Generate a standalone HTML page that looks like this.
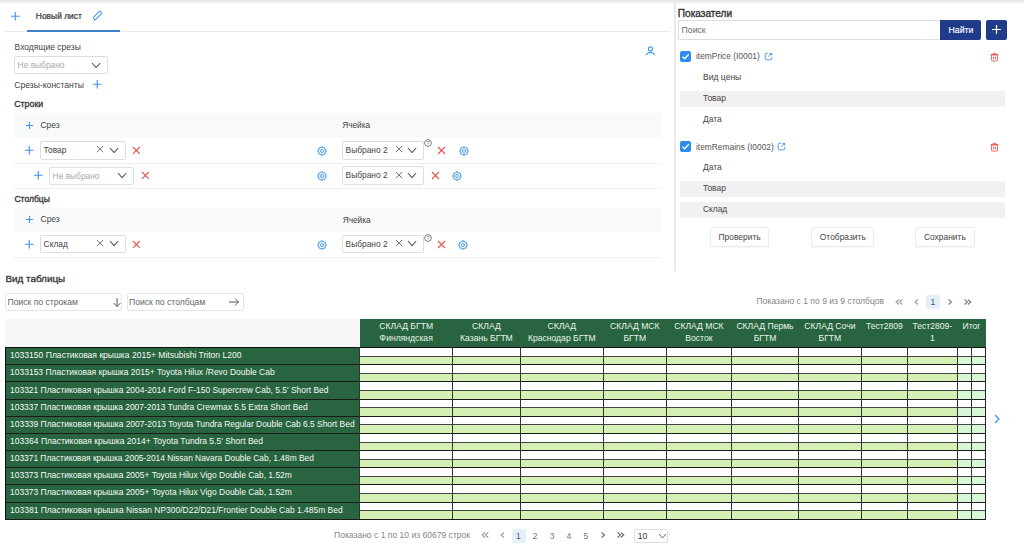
<!DOCTYPE html><html><head><meta charset="utf-8"><style>
html,body{margin:0;padding:0;}
body{width:1024px;height:552px;overflow:hidden;position:relative;background:#fff;font-family:"Liberation Sans", sans-serif;}
.a{position:absolute;}
.t{position:absolute;line-height:1;white-space:nowrap;}
</style></head><body>
<div class="a" style="left:0px;top:0px;width:1024px;height:5px;background:linear-gradient(#e3e3e3,#f4f4f4 50%,#fff)"></div>
<svg class="a" style="left:10.3px;top:10.899999999999999px" width="10.6" height="10.6" viewBox="0 0 10.6 10.6"><path d="M5.3 1V9.6M1 5.3H9.6" stroke="#3f93f2" stroke-width="1.1" fill="none"/></svg>
<div class="t" style="left:35.80px;top:12.05px;font-size:8.45px;font-weight:400;color:#333;-webkit-text-stroke:0.2px #333">Новый лист</div>
<svg class="a" style="left:91px;top:9px" width="13" height="13" viewBox="0 0 13 13"><g transform="translate(6.4 6.5) rotate(-45)"><path d="M-5 1.5V-0.2A1.6 1.6 0 0 1 -3.4 -1.6H3.6A1.6 1.6 0 0 1 3.6 1.6H-3.6Z" stroke="#3f93f2" stroke-width="1" fill="none" stroke-linejoin="round"/></g></svg>
<div class="a" style="left:5px;top:31px;width:665px;height:1px;background:#e8eaec"></div>
<div class="a" style="left:27px;top:30px;width:93px;height:2px;background:#3f7fd0"></div>
<div class="t" style="left:14.60px;top:43.40px;font-size:8.5px;font-weight:400;color:#444;">Входящие срезы</div>
<div class="a" style="left:14px;top:56px;width:94px;height:18px;border:1px solid #dcdee2;border-radius:2px;box-sizing:border-box;background:#fff"></div>
<div class="t" style="left:17.60px;top:61.09px;font-size:8.4px;font-weight:400;color:#a8a8a8;">Не выбрано</div>
<svg class="a" style="left:91.2px;top:61.8px" width="10.2" height="6.6" viewBox="0 0 10.2 6.6"><path d="M1 1L5.1 5.6L9.2 1" stroke="#555" stroke-width="1.1" fill="none"/></svg>
<div class="t" style="left:14.20px;top:80.52px;font-size:8.6px;font-weight:400;color:#444;">Срезы-константы</div>
<svg class="a" style="left:91.75px;top:79.25px" width="10.5" height="10.5" viewBox="0 0 10.5 10.5"><path d="M5.25 1V9.5M1 5.25H9.5" stroke="#3f93f2" stroke-width="1.15" fill="none"/></svg>
<svg class="a" style="left:644px;top:46px" width="13" height="11" viewBox="0 0 13 11"><circle cx="6.4" cy="2.9" r="2.0" stroke="#3f93f2" stroke-width="1.1" fill="none"/><path d="M2.3 8.7C3.2 7 4.6 6.4 6.4 6.4S9.7 7 10.6 8.7" stroke="#3f93f2" stroke-width="1.1" fill="none" stroke-linecap="round"/></svg>
<div class="t" style="left:14.20px;top:100.31px;font-size:8.85px;font-weight:400;color:#333;-webkit-text-stroke:0.3px #333">Строки</div>
<div class="a" style="left:14px;top:113px;width:647px;height:25px;background:#f8f9fa"></div>
<svg class="a" style="left:25.2px;top:121.0px" width="9" height="9" viewBox="0 0 9 9"><path d="M4.5 1V8M1 4.5H8" stroke="#3f93f2" stroke-width="1.0" fill="none"/></svg>
<div class="t" style="left:40.50px;top:121.19px;font-size:8.4px;font-weight:400;color:#444;">Срез</div>
<div class="t" style="left:342.20px;top:121.37px;font-size:8.3px;font-weight:400;color:#444;">Ячейка</div>
<svg class="a" style="left:24.15px;top:145.45px" width="10.5" height="10.5" viewBox="0 0 10.5 10.5"><path d="M5.25 1V9.5M1 5.25H9.5" stroke="#3f93f2" stroke-width="1.15" fill="none"/></svg>
<div class="a" style="left:40px;top:141px;width:85.5px;height:18.5px;border:1px solid #dcdee2;border-radius:2px;box-sizing:border-box;background:#fff"></div>
<div class="t" style="left:43.60px;top:146.09px;font-size:8.4px;font-weight:400;color:#444;">Товар</div>
<svg class="a" style="left:96.0px;top:145.4px" width="8.2" height="8.2" viewBox="0 0 8.2 8.2"><path d="M1 1L7.2 7.2M7.2 1L1 7.2" stroke="#707070" stroke-width="1.0" fill="none"/></svg>
<svg class="a" style="left:108.7px;top:146.8px" width="10.2" height="6.6" viewBox="0 0 10.2 6.6"><path d="M1 1L5.1 5.6L9.2 1" stroke="#555" stroke-width="1.1" fill="none"/></svg>
<svg class="a" style="left:132.0px;top:146.39999999999998px" width="8.8" height="8.8" viewBox="0 0 8.8 8.8"><path d="M1 1L7.800000000000001 7.800000000000001M7.800000000000001 1L1 7.800000000000001" stroke="#e4534c" stroke-width="1.1" fill="none"/></svg>
<svg class="a" style="left:316.3px;top:144.70000000000002px" width="12" height="12" viewBox="0 0 12 12"><polygon points="6.00,1.70 7.32,2.82 9.04,2.96 9.18,4.68 10.30,6.00 9.18,7.32 9.04,9.04 7.32,9.18 6.00,10.30 4.68,9.18 2.96,9.04 2.82,7.32 1.70,6.00 2.82,4.68 2.96,2.96 4.68,2.82" stroke="#4499f2" stroke-width="1.1" fill="none" stroke-linejoin="round"/><circle cx="6" cy="6" r="1.5" stroke="#4499f2" stroke-width="0.95" fill="none"/></svg>
<div class="a" style="left:342px;top:141px;width:82px;height:18.5px;border:1px solid #dcdee2;border-radius:2px;box-sizing:border-box;background:#fff"></div>
<div class="t" style="left:345.60px;top:146.09px;font-size:8.4px;font-weight:400;color:#444;">Выбрано 2</div>
<svg class="a" style="left:394.5px;top:145.4px" width="8.2" height="8.2" viewBox="0 0 8.2 8.2"><path d="M1 1L7.2 7.2M7.2 1L1 7.2" stroke="#707070" stroke-width="1.0" fill="none"/></svg>
<svg class="a" style="left:407.2px;top:146.8px" width="10.2" height="6.6" viewBox="0 0 10.2 6.6"><path d="M1 1L5.1 5.6L9.2 1" stroke="#555" stroke-width="1.1" fill="none"/></svg>
<svg class="a" style="left:424.2px;top:139.3px" width="8" height="8" viewBox="0 0 8 8"><circle cx="4" cy="4" r="3.4" stroke="#6a6a6a" stroke-width="0.85" fill="none"/><text x="4" y="6.1" font-size="5.6" text-anchor="middle" fill="#6a6a6a" font-family="Liberation Sans">?</text></svg>
<svg class="a" style="left:437.1px;top:146.39999999999998px" width="9.0" height="9.0" viewBox="0 0 9.0 9.0"><path d="M1 1L8.0 8.0M8.0 1L1 8.0" stroke="#e4534c" stroke-width="1.1" fill="none"/></svg>
<svg class="a" style="left:457.5px;top:145.0px" width="12" height="12" viewBox="0 0 12 12"><polygon points="6.00,1.70 7.32,2.82 9.04,2.96 9.18,4.68 10.30,6.00 9.18,7.32 9.04,9.04 7.32,9.18 6.00,10.30 4.68,9.18 2.96,9.04 2.82,7.32 1.70,6.00 2.82,4.68 2.96,2.96 4.68,2.82" stroke="#4499f2" stroke-width="1.1" fill="none" stroke-linejoin="round"/><circle cx="6" cy="6" r="1.5" stroke="#4499f2" stroke-width="0.95" fill="none"/></svg>
<div class="a" style="left:14px;top:163px;width:647px;height:1px;background:#eceef1"></div>
<svg class="a" style="left:32.85px;top:170.25px" width="10.5" height="10.5" viewBox="0 0 10.5 10.5"><path d="M5.25 1V9.5M1 5.25H9.5" stroke="#3f93f2" stroke-width="1.15" fill="none"/></svg>
<div class="a" style="left:49px;top:166.5px;width:85px;height:18.19999999999999px;border:1px solid #dcdee2;border-radius:2px;box-sizing:border-box;background:#fff"></div>
<div class="t" style="left:52.60px;top:171.59px;font-size:8.4px;font-weight:400;color:#a8a8a8;">Не выбрано</div>
<svg class="a" style="left:117.2px;top:172.3px" width="10.2" height="6.6" viewBox="0 0 10.2 6.6"><path d="M1 1L5.1 5.6L9.2 1" stroke="#555" stroke-width="1.1" fill="none"/></svg>
<svg class="a" style="left:140.5px;top:171.2px" width="8.8" height="8.8" viewBox="0 0 8.8 8.8"><path d="M1 1L7.800000000000001 7.800000000000001M7.800000000000001 1L1 7.800000000000001" stroke="#e4534c" stroke-width="1.1" fill="none"/></svg>
<svg class="a" style="left:316.2px;top:169.60000000000002px" width="12" height="12" viewBox="0 0 12 12"><polygon points="6.00,1.70 7.32,2.82 9.04,2.96 9.18,4.68 10.30,6.00 9.18,7.32 9.04,9.04 7.32,9.18 6.00,10.30 4.68,9.18 2.96,9.04 2.82,7.32 1.70,6.00 2.82,4.68 2.96,2.96 4.68,2.82" stroke="#4499f2" stroke-width="1.1" fill="none" stroke-linejoin="round"/><circle cx="6" cy="6" r="1.5" stroke="#4499f2" stroke-width="0.95" fill="none"/></svg>
<div class="a" style="left:342px;top:166.3px;width:82px;height:18.399999999999977px;border:1px solid #dcdee2;border-radius:2px;box-sizing:border-box;background:#fff"></div>
<div class="t" style="left:345.60px;top:171.39px;font-size:8.4px;font-weight:400;color:#444;">Выбрано 2</div>
<svg class="a" style="left:394.5px;top:170.70000000000002px" width="8.2" height="8.2" viewBox="0 0 8.2 8.2"><path d="M1 1L7.2 7.2M7.2 1L1 7.2" stroke="#707070" stroke-width="1.0" fill="none"/></svg>
<svg class="a" style="left:407.2px;top:172.10000000000002px" width="10.2" height="6.6" viewBox="0 0 10.2 6.6"><path d="M1 1L5.1 5.6L9.2 1" stroke="#555" stroke-width="1.1" fill="none"/></svg>
<svg class="a" style="left:430.5px;top:171.2px" width="9.0" height="9.0" viewBox="0 0 9.0 9.0"><path d="M1 1L8.0 8.0M8.0 1L1 8.0" stroke="#e4534c" stroke-width="1.1" fill="none"/></svg>
<svg class="a" style="left:450.6px;top:169.60000000000002px" width="12" height="12" viewBox="0 0 12 12"><polygon points="6.00,1.70 7.32,2.82 9.04,2.96 9.18,4.68 10.30,6.00 9.18,7.32 9.04,9.04 7.32,9.18 6.00,10.30 4.68,9.18 2.96,9.04 2.82,7.32 1.70,6.00 2.82,4.68 2.96,2.96 4.68,2.82" stroke="#4499f2" stroke-width="1.1" fill="none" stroke-linejoin="round"/><circle cx="6" cy="6" r="1.5" stroke="#4499f2" stroke-width="0.95" fill="none"/></svg>
<div class="a" style="left:14px;top:188px;width:647px;height:1px;background:#eceef1"></div>
<div class="t" style="left:14.40px;top:194.76px;font-size:8.55px;font-weight:400;color:#333;-webkit-text-stroke:0.3px #333">Столбцы</div>
<div class="a" style="left:14px;top:208px;width:647px;height:24px;background:#f8f9fa"></div>
<svg class="a" style="left:25.2px;top:215.1px" width="9" height="9" viewBox="0 0 9 9"><path d="M4.5 1V8M1 4.5H8" stroke="#3f93f2" stroke-width="1.0" fill="none"/></svg>
<div class="t" style="left:40.60px;top:215.29px;font-size:8.4px;font-weight:400;color:#444;">Срез</div>
<div class="t" style="left:342.70px;top:215.57px;font-size:8.3px;font-weight:400;color:#444;">Ячейка</div>
<svg class="a" style="left:24.25px;top:239.15px" width="10.5" height="10.5" viewBox="0 0 10.5 10.5"><path d="M5.25 1V9.5M1 5.25H9.5" stroke="#3f93f2" stroke-width="1.15" fill="none"/></svg>
<div class="a" style="left:40px;top:234.5px;width:85.5px;height:18.900000000000006px;border:1px solid #dcdee2;border-radius:2px;box-sizing:border-box;background:#fff"></div>
<div class="t" style="left:43.60px;top:239.59px;font-size:8.4px;font-weight:400;color:#444;">Склад</div>
<svg class="a" style="left:96.0px;top:238.9px" width="8.2" height="8.2" viewBox="0 0 8.2 8.2"><path d="M1 1L7.2 7.2M7.2 1L1 7.2" stroke="#707070" stroke-width="1.0" fill="none"/></svg>
<svg class="a" style="left:108.7px;top:240.3px" width="10.2" height="6.6" viewBox="0 0 10.2 6.6"><path d="M1 1L5.1 5.6L9.2 1" stroke="#555" stroke-width="1.1" fill="none"/></svg>
<svg class="a" style="left:132.3px;top:239.89999999999998px" width="8.8" height="8.8" viewBox="0 0 8.8 8.8"><path d="M1 1L7.800000000000001 7.800000000000001M7.800000000000001 1L1 7.800000000000001" stroke="#e4534c" stroke-width="1.1" fill="none"/></svg>
<svg class="a" style="left:316.2px;top:238.60000000000002px" width="12" height="12" viewBox="0 0 12 12"><polygon points="6.00,1.70 7.32,2.82 9.04,2.96 9.18,4.68 10.30,6.00 9.18,7.32 9.04,9.04 7.32,9.18 6.00,10.30 4.68,9.18 2.96,9.04 2.82,7.32 1.70,6.00 2.82,4.68 2.96,2.96 4.68,2.82" stroke="#4499f2" stroke-width="1.1" fill="none" stroke-linejoin="round"/><circle cx="6" cy="6" r="1.5" stroke="#4499f2" stroke-width="0.95" fill="none"/></svg>
<div class="a" style="left:342px;top:234.6px;width:82px;height:18.700000000000017px;border:1px solid #dcdee2;border-radius:2px;box-sizing:border-box;background:#fff"></div>
<div class="t" style="left:345.60px;top:239.69px;font-size:8.4px;font-weight:400;color:#444;">Выбрано 2</div>
<svg class="a" style="left:394.5px;top:239.0px" width="8.2" height="8.2" viewBox="0 0 8.2 8.2"><path d="M1 1L7.2 7.2M7.2 1L1 7.2" stroke="#707070" stroke-width="1.0" fill="none"/></svg>
<svg class="a" style="left:407.2px;top:240.4px" width="10.2" height="6.6" viewBox="0 0 10.2 6.6"><path d="M1 1L5.1 5.6L9.2 1" stroke="#555" stroke-width="1.1" fill="none"/></svg>
<svg class="a" style="left:424.2px;top:233.6px" width="8" height="8" viewBox="0 0 8 8"><circle cx="4" cy="4" r="3.4" stroke="#6a6a6a" stroke-width="0.85" fill="none"/><text x="4" y="6.1" font-size="5.6" text-anchor="middle" fill="#6a6a6a" font-family="Liberation Sans">?</text></svg>
<svg class="a" style="left:436.8px;top:239.89999999999998px" width="9.0" height="9.0" viewBox="0 0 9.0 9.0"><path d="M1 1L8.0 8.0M8.0 1L1 8.0" stroke="#e4534c" stroke-width="1.1" fill="none"/></svg>
<svg class="a" style="left:457.2px;top:238.60000000000002px" width="12" height="12" viewBox="0 0 12 12"><polygon points="6.00,1.70 7.32,2.82 9.04,2.96 9.18,4.68 10.30,6.00 9.18,7.32 9.04,9.04 7.32,9.18 6.00,10.30 4.68,9.18 2.96,9.04 2.82,7.32 1.70,6.00 2.82,4.68 2.96,2.96 4.68,2.82" stroke="#4499f2" stroke-width="1.1" fill="none" stroke-linejoin="round"/><circle cx="6" cy="6" r="1.5" stroke="#4499f2" stroke-width="0.95" fill="none"/></svg>
<div class="a" style="left:14px;top:256.5px;width:647px;height:1.0px;background:#eceef1"></div>
<div class="a" style="left:674px;top:1px;width:2px;height:270px;background:#e9eaec"></div>
<div class="t" style="left:677.80px;top:8.85px;font-size:10.1px;font-weight:400;color:#333;-webkit-text-stroke:0.35px #333">Показатели</div>
<div class="a" style="left:678px;top:20px;width:262px;height:20px;border:1px solid #dcdee2;border-right:none;box-sizing:border-box;border-radius:2px 0 0 2px"></div>
<div class="t" style="left:681.60px;top:25.84px;font-size:8.7px;font-weight:400;color:#6a6a6a;">Поиск</div>
<div class="a" style="left:940px;top:20px;width:41px;height:20px;background:#1f3b8a;border-radius:0 2px 2px 0"></div>
<div class="t" style="left:948.60px;top:26.04px;font-size:8.7px;font-weight:400;color:#fff;-webkit-text-stroke:0.15px #fff">Найти</div>
<div class="a" style="left:986px;top:20px;width:21.299999999999955px;height:20px;background:#1f3b8a;border-radius:2px"></div>
<svg class="a" style="left:991.2px;top:23.9px" width="11" height="11" viewBox="0 0 11 11"><path d="M5.5 1V10M1 5.5H10" stroke="#fff" stroke-width="1.2" fill="none"/></svg>
<svg class="a" style="left:679.8px;top:51px" width="11" height="11" viewBox="0 0 11 11"><rect x="0" y="0" width="11" height="11" rx="2" fill="#2d8cf0"/><path d="M2.4 5.6L4.6 7.8L8.8 3.2" stroke="#fff" stroke-width="1.3" fill="none"/></svg>
<div class="t" style="left:696.00px;top:52.49px;font-size:8.4px;font-weight:400;color:#555;">itemPrice (I0001)</div>
<svg class="a" style="left:763.7px;top:51.7px" width="9" height="9" viewBox="0 0 9 9"><path d="M4.2 1.2H2.5a1.3 1.3 0 0 0-1.3 1.3V6.5a1.3 1.3 0 0 0 1.3 1.3H6.5a1.3 1.3 0 0 0 1.3-1.3V4.9" stroke="#3f93f2" stroke-width="0.95" fill="none"/><path d="M4.3 4.7L7.2 1.8" stroke="#3f93f2" stroke-width="0.9" fill="none"/><path d="M5.2 0.9H8.1V3.8Z" fill="#3f93f2"/></svg>
<svg class="a" style="left:989.8px;top:51.5px" width="9" height="10" viewBox="0 0 9 10"><path d="M1.6 2.9H7.4V8.2a0.8 0.8 0 0 1-0.8 0.8H2.4a0.8 0.8 0 0 1-0.8-0.8Z" stroke="#e4534c" stroke-width="0.9" fill="none"/><path d="M0.6 2.6H8.4M3.2 2.5V1.3H5.8V2.5M3.6 4.6V7.2M5.4 4.6V7.2" stroke="#e4534c" stroke-width="0.9" fill="none"/></svg>
<div class="t" style="left:703.00px;top:72.96px;font-size:8.55px;font-weight:400;color:#444;">Вид цены</div>
<div class="a" style="left:679.8px;top:90.8px;width:325.20000000000005px;height:16.0px;background:#f1f1f1"></div>
<div class="t" style="left:703.00px;top:94.09px;font-size:8.4px;font-weight:400;color:#444;">Товар</div>
<div class="t" style="left:703.00px;top:114.69px;font-size:8.4px;font-weight:400;color:#444;">Дата</div>
<svg class="a" style="left:679.8px;top:141px" width="11" height="11" viewBox="0 0 11 11"><rect x="0" y="0" width="11" height="11" rx="2" fill="#2d8cf0"/><path d="M2.4 5.6L4.6 7.8L8.8 3.2" stroke="#fff" stroke-width="1.3" fill="none"/></svg>
<div class="t" style="left:696.00px;top:142.59px;font-size:8.4px;font-weight:400;color:#555;">itemRemains (I0002)</div>
<svg class="a" style="left:777.2px;top:141.7px" width="9" height="9" viewBox="0 0 9 9"><path d="M4.2 1.2H2.5a1.3 1.3 0 0 0-1.3 1.3V6.5a1.3 1.3 0 0 0 1.3 1.3H6.5a1.3 1.3 0 0 0 1.3-1.3V4.9" stroke="#3f93f2" stroke-width="0.95" fill="none"/><path d="M4.3 4.7L7.2 1.8" stroke="#3f93f2" stroke-width="0.9" fill="none"/><path d="M5.2 0.9H8.1V3.8Z" fill="#3f93f2"/></svg>
<svg class="a" style="left:989.8px;top:141.5px" width="9" height="10" viewBox="0 0 9 10"><path d="M1.6 2.9H7.4V8.2a0.8 0.8 0 0 1-0.8 0.8H2.4a0.8 0.8 0 0 1-0.8-0.8Z" stroke="#e4534c" stroke-width="0.9" fill="none"/><path d="M0.6 2.6H8.4M3.2 2.5V1.3H5.8V2.5M3.6 4.6V7.2M5.4 4.6V7.2" stroke="#e4534c" stroke-width="0.9" fill="none"/></svg>
<div class="t" style="left:703.00px;top:163.09px;font-size:8.4px;font-weight:400;color:#444;">Дата</div>
<div class="a" style="left:679.8px;top:180.8px;width:325.20000000000005px;height:16.0px;background:#f1f1f1"></div>
<div class="t" style="left:703.00px;top:184.09px;font-size:8.4px;font-weight:400;color:#444;">Товар</div>
<div class="a" style="left:679.8px;top:201.5px;width:325.20000000000005px;height:16.30000000000001px;background:#f1f1f1"></div>
<div class="t" style="left:703.00px;top:205.09px;font-size:8.4px;font-weight:400;color:#444;">Склад</div>
<div class="a" style="left:709.7px;top:227px;width:59.799999999999955px;height:19.5px;border:1px solid #eaecef;border-radius:2px;box-sizing:border-box;background:#fff;box-shadow:0 0.5px 1px rgba(0,0,0,0.04)"></div>
<div class="t" style="left:709.7px;top:233.15px;width:59.799999999999955px;text-align:center;font-size:8.45px;color:#444">Проверить</div>
<div class="a" style="left:811.3px;top:227px;width:63.0px;height:19.5px;border:1px solid #eaecef;border-radius:2px;box-sizing:border-box;background:#fff;box-shadow:0 0.5px 1px rgba(0,0,0,0.04)"></div>
<div class="t" style="left:811.3px;top:233.15px;width:63.0px;text-align:center;font-size:8.45px;color:#444">Отобразить</div>
<div class="a" style="left:915px;top:227px;width:59.700000000000045px;height:19.5px;border:1px solid #eaecef;border-radius:2px;box-sizing:border-box;background:#fff;box-shadow:0 0.5px 1px rgba(0,0,0,0.04)"></div>
<div class="t" style="left:915px;top:233.15px;width:59.700000000000045px;text-align:center;font-size:8.45px;color:#444">Сохранить</div>
<div class="t" style="left:5.40px;top:274.02px;font-size:9.9px;font-weight:400;color:#383838;-webkit-text-stroke:0.35px #383838">Вид таблицы</div>
<div class="a" style="left:5.4px;top:292.8px;width:116.19999999999999px;height:17.899999999999977px;border:1px solid #e3e5e8;border-radius:2px;box-sizing:border-box"></div>
<div class="t" style="left:7.50px;top:297.52px;font-size:8.6px;font-weight:400;color:#666;">Поиск по строкам</div>
<svg class="a" style="left:111.5px;top:297px" width="10" height="11" viewBox="0 0 10 11"><path d="M5 1V9.5M1.5 6L5 9.5L8.5 6" stroke="#555" stroke-width="1" fill="none"/></svg>
<div class="a" style="left:127px;top:292.8px;width:117px;height:17.899999999999977px;border:1px solid #e3e5e8;border-radius:2px;box-sizing:border-box"></div>
<div class="t" style="left:129.00px;top:297.52px;font-size:8.6px;font-weight:400;color:#666;">Поиск по столбцам</div>
<svg class="a" style="left:227.5px;top:296.5px" width="12" height="10" viewBox="0 0 12 10"><path d="M1 5H10.5M7 1.5L10.5 5L7 8.5" stroke="#555" stroke-width="1" fill="none"/></svg>
<div class="t" style="left:756.60px;top:297.06px;font-size:8.55px;font-weight:400;color:#858585;">Показано с 1 по 9 из 9 столбцов</div>
<svg class="a" style="left:895px;top:298.6px" width="8" height="6" viewBox="0 0 8 6"><path d="M4 0.5L1 3L4 5.5M7.3 0.5L4.3 3L7.3 5.5" stroke="#999" stroke-width="1.05" fill="none"/></svg>
<svg class="a" style="left:913.8px;top:298.6px" width="4.5" height="6" viewBox="0 0 4.5 6"><path d="M4 0.5L1 3L4 5.5" stroke="#999" stroke-width="1.05" fill="none"/></svg>
<div class="a" style="left:926.3px;top:294.8px;width:13.900000000000091px;height:14.199999999999989px;background:#e3effb;border-radius:2px"></div>
<div class="t" style="left:930.60px;top:297.80px;font-size:8.5px;font-weight:400;color:#555;">1</div>
<svg class="a" style="left:948px;top:298.6px" width="4.5" height="6" viewBox="0 0 4.5 6"><path d="M0.5 0.5L3.5 3L0.5 5.5" stroke="#777" stroke-width="1.05" fill="none"/></svg>
<svg class="a" style="left:964px;top:298.6px" width="8" height="6" viewBox="0 0 8 6"><path d="M0.5 0.5L3.5 3L0.5 5.5M3.8 0.5L6.8 3L3.8 5.5" stroke="#777" stroke-width="1.05" fill="none"/></svg>
<div class="a" style="left:5px;top:318.5px;width:354.5px;height:29.0px;background:#f6f7f7"></div>
<div class="a" style="left:359.5px;top:318.5px;width:626.0px;height:29.0px;background:#27643f"></div>
<div class="t" style="left:359.5px;top:322.05px;width:93.39999999999998px;text-align:center;font-size:8.6px;color:#eaf5ec">СКЛАД БГТМ</div>
<div class="t" style="left:359.5px;top:334.45px;width:93.39999999999998px;text-align:center;font-size:8.6px;color:#eaf5ec">Финляндская</div>
<div class="t" style="left:452.9px;top:322.05px;width:67.10000000000002px;text-align:center;font-size:8.6px;color:#eaf5ec">СКЛАД</div>
<div class="t" style="left:452.9px;top:334.45px;width:67.10000000000002px;text-align:center;font-size:8.6px;color:#eaf5ec">Казань БГТМ</div>
<div class="t" style="left:520px;top:322.05px;width:83.70000000000005px;text-align:center;font-size:8.6px;color:#eaf5ec">СКЛАД</div>
<div class="t" style="left:520px;top:334.45px;width:83.70000000000005px;text-align:center;font-size:8.6px;color:#eaf5ec">Краснодар БГТМ</div>
<div class="t" style="left:603.7px;top:322.05px;width:62.299999999999955px;text-align:center;font-size:8.6px;color:#eaf5ec">СКЛАД МСК</div>
<div class="t" style="left:603.7px;top:334.45px;width:62.299999999999955px;text-align:center;font-size:8.6px;color:#eaf5ec">БГТМ</div>
<div class="t" style="left:666px;top:322.05px;width:65.79999999999995px;text-align:center;font-size:8.6px;color:#eaf5ec">СКЛАД МСК</div>
<div class="t" style="left:666px;top:334.45px;width:65.79999999999995px;text-align:center;font-size:8.6px;color:#eaf5ec">Восток</div>
<div class="t" style="left:731.8px;top:322.05px;width:66.40000000000009px;text-align:center;font-size:8.6px;color:#eaf5ec">СКЛАД Пермь</div>
<div class="t" style="left:731.8px;top:334.45px;width:66.40000000000009px;text-align:center;font-size:8.6px;color:#eaf5ec">БГТМ</div>
<div class="t" style="left:798.2px;top:322.05px;width:63.39999999999998px;text-align:center;font-size:8.6px;color:#eaf5ec">СКЛАД Сочи</div>
<div class="t" style="left:798.2px;top:334.45px;width:63.39999999999998px;text-align:center;font-size:8.6px;color:#eaf5ec">БГТМ</div>
<div class="t" style="left:861.6px;top:322.05px;width:45.60000000000002px;text-align:center;font-size:8.6px;color:#eaf5ec">Тест2809</div>
<div class="t" style="left:907.2px;top:322.05px;width:50.299999999999955px;text-align:center;font-size:8.6px;color:#eaf5ec">Тест2809-</div>
<div class="t" style="left:907.2px;top:334.45px;width:50.299999999999955px;text-align:center;font-size:8.6px;color:#eaf5ec">1</div>
<div class="t" style="left:957.5px;top:322.05px;width:28.0px;text-align:center;font-size:8.6px;color:#eaf5ec">Итог</div>
<div class="a" style="left:5px;top:347px;width:354.5px;height:172px;background:#27643f"></div>
<div class="a" style="left:359px;top:347px;width:626px;height:172px;background:#fff"></div>
<div class="t" style="left:10.10px;top:351.16px;font-size:8.55px;font-weight:400;color:#f6faf6;">1033150 Пластиковая крышка 2015+ Mitsubishi Triton L200</div>
<div class="a" style="left:359px;top:356px;width:598px;height:8px;background:#d5f0b4"></div>
<div class="a" style="left:957px;top:356px;width:28px;height:8px;background:#d6f8d6"></div>
<div class="a" style="left:359px;top:356px;width:626px;height:1px;background:#444"></div>
<div class="a" style="left:5px;top:364px;width:980px;height:1px;background:#1a1a1a"></div>
<div class="t" style="left:10.10px;top:368.38px;font-size:8.47px;font-weight:400;color:#f6faf6;">1033153 Пластиковая крышка 2015+ Toyota Hilux /Revo Double Cab</div>
<div class="a" style="left:359px;top:373px;width:598px;height:8px;background:#d5f0b4"></div>
<div class="a" style="left:957px;top:373px;width:28px;height:8px;background:#d6f8d6"></div>
<div class="a" style="left:359px;top:373px;width:626px;height:1px;background:#444"></div>
<div class="a" style="left:5px;top:381px;width:980px;height:1px;background:#1a1a1a"></div>
<div class="t" style="left:10.10px;top:385.54px;font-size:8.455px;font-weight:400;color:#f6faf6;">103321 Пластиковая крышка 2004-2014 Ford F-150 Supercrew Cab, 5.5' Short Bed</div>
<div class="a" style="left:359px;top:390px;width:598px;height:9px;background:#d5f0b4"></div>
<div class="a" style="left:957px;top:390px;width:28px;height:9px;background:#d6f8d6"></div>
<div class="a" style="left:359px;top:390px;width:626px;height:1px;background:#444"></div>
<div class="a" style="left:5px;top:399px;width:980px;height:1px;background:#1a1a1a"></div>
<div class="t" style="left:10.10px;top:402.72px;font-size:8.42px;font-weight:400;color:#f6faf6;">103337 Пластиковая крышка 2007-2013 Tundra Crewmax 5.5 Extra Short Bed</div>
<div class="a" style="left:359px;top:407px;width:598px;height:9px;background:#d5f0b4"></div>
<div class="a" style="left:957px;top:407px;width:28px;height:9px;background:#d6f8d6"></div>
<div class="a" style="left:359px;top:407px;width:626px;height:1px;background:#444"></div>
<div class="a" style="left:5px;top:416px;width:980px;height:1px;background:#1a1a1a"></div>
<div class="t" style="left:10.10px;top:419.85px;font-size:8.45px;font-weight:400;color:#f6faf6;">103339 Пластиковая крышка 2007-2013 Toyota Tundra Regular Double Cab 6.5 Short Bed</div>
<div class="a" style="left:359px;top:424px;width:598px;height:9px;background:#d5f0b4"></div>
<div class="a" style="left:957px;top:424px;width:28px;height:9px;background:#d6f8d6"></div>
<div class="a" style="left:359px;top:424px;width:626px;height:1px;background:#444"></div>
<div class="a" style="left:5px;top:433px;width:980px;height:1px;background:#1a1a1a"></div>
<div class="t" style="left:10.10px;top:436.94px;font-size:8.52px;font-weight:400;color:#f6faf6;">103364 Пластиковая крышка 2014+ Toyota Tundra 5.5' Short Bed</div>
<div class="a" style="left:359px;top:442px;width:598px;height:8px;background:#d5f0b4"></div>
<div class="a" style="left:957px;top:442px;width:28px;height:8px;background:#d6f8d6"></div>
<div class="a" style="left:359px;top:442px;width:626px;height:1px;background:#444"></div>
<div class="a" style="left:5px;top:450px;width:980px;height:1px;background:#1a1a1a"></div>
<div class="t" style="left:10.10px;top:454.20px;font-size:8.39px;font-weight:400;color:#f6faf6;">103371 Пластиковая крышка 2005-2014 Nissan Navara Double Cab, 1.48m Bed</div>
<div class="a" style="left:359px;top:459px;width:598px;height:8px;background:#d5f0b4"></div>
<div class="a" style="left:957px;top:459px;width:28px;height:8px;background:#d6f8d6"></div>
<div class="a" style="left:359px;top:459px;width:626px;height:1px;background:#444"></div>
<div class="a" style="left:5px;top:467px;width:980px;height:1px;background:#1a1a1a"></div>
<div class="t" style="left:10.10px;top:471.30px;font-size:8.45px;font-weight:400;color:#f6faf6;">103373 Пластиковая крышка 2005+ Toyota Hilux Vigo Double Cab, 1.52m</div>
<div class="a" style="left:359px;top:476px;width:598px;height:8px;background:#d5f0b4"></div>
<div class="a" style="left:957px;top:476px;width:28px;height:8px;background:#d6f8d6"></div>
<div class="a" style="left:359px;top:476px;width:626px;height:1px;background:#444"></div>
<div class="a" style="left:5px;top:484px;width:980px;height:1px;background:#1a1a1a"></div>
<div class="t" style="left:10.10px;top:488.45px;font-size:8.45px;font-weight:400;color:#f6faf6;">103373 Пластиковая крышка 2005+ Toyota Hilux Vigo Double Cab, 1.52m</div>
<div class="a" style="left:359px;top:493px;width:598px;height:9px;background:#d5f0b4"></div>
<div class="a" style="left:957px;top:493px;width:28px;height:9px;background:#d6f8d6"></div>
<div class="a" style="left:359px;top:493px;width:626px;height:1px;background:#444"></div>
<div class="a" style="left:5px;top:502px;width:980px;height:1px;background:#1a1a1a"></div>
<div class="t" style="left:10.10px;top:505.57px;font-size:8.48px;font-weight:400;color:#f6faf6;">103381 Пластиковая крышка Nissan NP300/D22/D21/Frontier Double Cab 1.485m Bed</div>
<div class="a" style="left:359px;top:510px;width:598px;height:9px;background:#d5f0b4"></div>
<div class="a" style="left:957px;top:510px;width:28px;height:9px;background:#d6f8d6"></div>
<div class="a" style="left:359px;top:510px;width:626px;height:1px;background:#444"></div>
<div class="a" style="left:5px;top:519px;width:980px;height:1px;background:#1a1a1a"></div>
<div class="a" style="left:5px;top:347px;width:981px;height:1px;background:#111"></div>
<div class="a" style="left:5px;top:347px;width:1px;height:172px;background:#111"></div>
<div class="a" style="left:359px;top:347px;width:1px;height:172px;background:#333"></div>
<div class="a" style="left:452px;top:347px;width:1px;height:172px;background:#333"></div>
<div class="a" style="left:520px;top:347px;width:1px;height:172px;background:#333"></div>
<div class="a" style="left:603px;top:347px;width:1px;height:172px;background:#333"></div>
<div class="a" style="left:666px;top:347px;width:1px;height:172px;background:#333"></div>
<div class="a" style="left:731px;top:347px;width:1px;height:172px;background:#333"></div>
<div class="a" style="left:798px;top:347px;width:1px;height:172px;background:#333"></div>
<div class="a" style="left:861px;top:347px;width:1px;height:172px;background:#333"></div>
<div class="a" style="left:907px;top:347px;width:1px;height:172px;background:#333"></div>
<div class="a" style="left:957px;top:347px;width:1px;height:172px;background:#333"></div>
<div class="a" style="left:971px;top:347px;width:1px;height:172px;background:#333"></div>
<div class="a" style="left:985px;top:347px;width:1px;height:173px;background:#222"></div>
<svg class="a" style="left:993px;top:414px" width="8" height="10" viewBox="0 0 8 10"><path d="M2 1L6 5L2 9" stroke="#3f93f2" stroke-width="1.2" fill="none"/></svg>
<div class="t" style="left:334.00px;top:531.16px;font-size:8.55px;font-weight:400;color:#858585;">Показано с 1 по 10 из 60679 строк</div>
<svg class="a" style="left:480.7px;top:532.3000000000001px" width="8" height="6" viewBox="0 0 8 6"><path d="M4 0.5L1 3L4 5.5M7.3 0.5L4.3 3L7.3 5.5" stroke="#999" stroke-width="1.05" fill="none"/></svg>
<svg class="a" style="left:499.7px;top:532.3000000000001px" width="4.5" height="6" viewBox="0 0 4.5 6"><path d="M4 0.5L1 3L4 5.5" stroke="#999" stroke-width="1.05" fill="none"/></svg>
<div class="a" style="left:511.6px;top:528.6px;width:14.399999999999977px;height:14.0px;background:#e3effb;border-radius:2px"></div>
<div class="t" style="left:516.00px;top:531.80px;font-size:8.5px;font-weight:400;color:#555;">1</div>
<div class="t" style="left:532.80px;top:531.80px;font-size:8.5px;font-weight:400;color:#777;">2</div>
<div class="t" style="left:549.80px;top:531.80px;font-size:8.5px;font-weight:400;color:#777;">3</div>
<div class="t" style="left:566.60px;top:531.80px;font-size:8.5px;font-weight:400;color:#777;">4</div>
<div class="t" style="left:583.60px;top:531.80px;font-size:8.5px;font-weight:400;color:#777;">5</div>
<svg class="a" style="left:601.3px;top:532.3000000000001px" width="4.5" height="6" viewBox="0 0 4.5 6"><path d="M0.5 0.5L3.5 3L0.5 5.5" stroke="#666" stroke-width="1.05" fill="none"/></svg>
<svg class="a" style="left:616.6px;top:532.3000000000001px" width="8" height="6" viewBox="0 0 8 6"><path d="M0.5 0.5L3.5 3L0.5 5.5M3.8 0.5L6.8 3L3.8 5.5" stroke="#666" stroke-width="1.05" fill="none"/></svg>
<div class="a" style="left:634px;top:528.6px;width:33.5px;height:14.0px;border:1px solid #dcdee2;border-radius:2px;box-sizing:border-box"></div>
<div class="t" style="left:637.80px;top:531.80px;font-size:8.5px;font-weight:400;color:#333;">10</div>
<svg class="a" style="left:657.7px;top:532.5px" width="9" height="6" viewBox="0 0 9 6"><path d="M1 1L4.5 5L8 1" stroke="#666" stroke-width="1.0" fill="none"/></svg>
</body></html>
